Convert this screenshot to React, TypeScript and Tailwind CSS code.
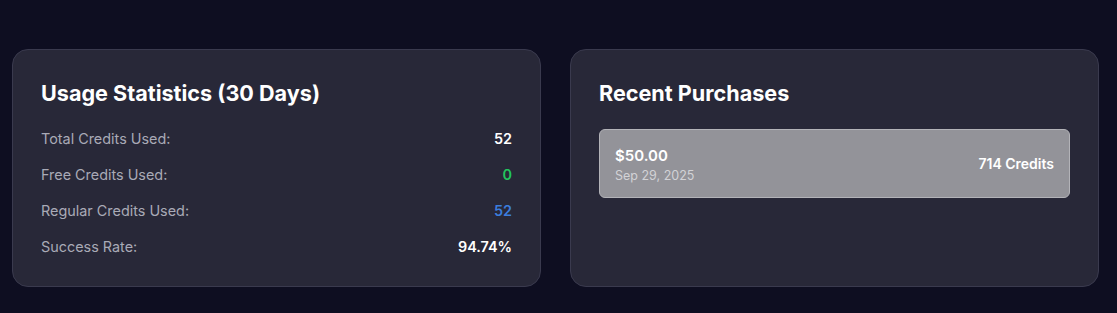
const stats = [
  { label: "Total Credits Used:", value: "52", color: "text-white" },
  { label: "Free Credits Used:", value: "0", color: "text-[#22c55e]" },
  { label: "Regular Credits Used:", value: "52", color: "text-[#3b7ddd]" },
  { label: "Success Rate:", value: "94.74%", color: "text-white" },
];

const purchases = [{ amount: "$50.00", date: "Sep 29, 2025", credits: "714 Credits" }];

const cardClassName =
  "w-[529px] h-[238px] rounded-2xl border border-[#3a3a4e] bg-[#282838] px-[28px] pt-[29px] pb-[29px]";

export default function App() {
  return (
    <div
      className="min-h-[313px] bg-[#0e0e21] pl-3 pt-[49px]"
      style={{ fontFamily: "Inter, 'Noto Sans', sans-serif" }}
    >
      <div className="flex gap-[29px]">
        <div className={cardClassName}>
          <h2 className="text-[21.6px] font-bold leading-7 text-white">Usage Statistics (30 Days)</h2>
          <div className="mt-[22px] flex flex-col gap-4">
            {stats.map((s) => (
              <div key={s.label} className="flex items-center justify-between text-[14.4px] leading-5">
                <span className="text-[#a9aab6]">{s.label}</span>
                <span className={`font-semibold ${s.color}`}>{s.value}</span>
              </div>
            ))}
          </div>
        </div>

        <div className={cardClassName}>
          <h2 className="text-[21.6px] font-bold leading-7 text-white">Recent Purchases</h2>
          <div className="mt-[22px] flex flex-col gap-3">
            {purchases.map((p) => (
              <div
                key={p.date}
                className="flex items-center justify-between rounded-md border border-[#b3b3b8] bg-[#939399] px-[15px] pt-[14px] pb-[13px]"
              >
                <div>
                  <div className="text-[15px] font-semibold leading-6 text-white">{p.amount}</div>
                  <div className="text-[12.5px] leading-4 text-[#d2d2d6]">{p.date}</div>
                </div>
                <span className="text-sm font-semibold text-white">{p.credits}</span>
              </div>
            ))}
          </div>
        </div>
      </div>
    </div>
  );
}
